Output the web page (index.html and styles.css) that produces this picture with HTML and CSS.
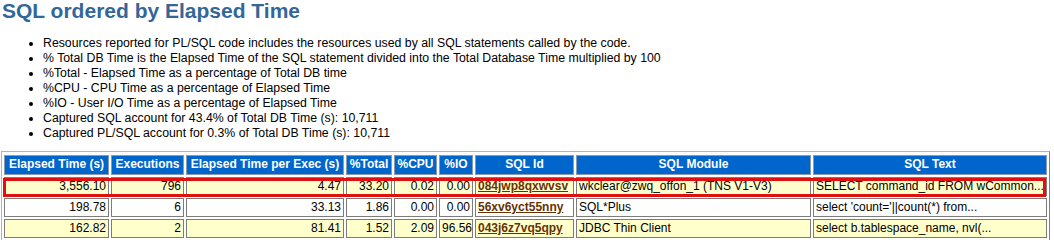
FILE: index.html
```html
<!DOCTYPE html>
<html>
<head>
<meta charset="utf-8">
<title>SQL ordered by Elapsed Time</title>
<link rel="stylesheet" href="styles.css">
</head>
<body>
<div class="page">
  <h2 class="title">SQL ordered by Elapsed Time</h2>
  <ul class="notes">
    <li>Resources reported for PL/SQL code includes the resources used by all SQL statements called by the code.</li>
    <li>% Total DB Time is the Elapsed Time of the SQL statement divided into the Total Database Time multiplied by 100</li>
    <li>%Total - Elapsed Time as a percentage of Total DB time</li>
    <li>%CPU - CPU Time as a percentage of Elapsed Time</li>
    <li>%IO - User I/O Time as a percentage of Elapsed Time</li>
    <li>Captured SQL account for 43.4% of Total DB Time (s): 10,711</li>
    <li>Captured PL/SQL account for 0.3% of Total DB Time (s): 10,711</li>
  </ul>
  <table class="awr">
    <colgroup>
      <col class="c1"><col class="c2"><col class="c3"><col class="c4"><col class="c5"><col class="c6"><col class="c7"><col class="c8"><col class="c9">
    </colgroup>
    <thead>
      <tr>
        <th>Elapsed Time (s)</th>
        <th>Executions</th>
        <th>Elapsed Time per Exec (s)</th>
        <th>%Total</th>
        <th>%CPU</th>
        <th>%IO</th>
        <th>SQL Id</th>
        <th>SQL Module</th>
        <th>SQL Text</th>
      </tr>
    </thead>
    <tbody>
      <tr class="alt">
        <td class="num">3,556.10</td>
        <td class="num">796</td>
        <td class="num">4.47</td>
        <td class="num">33.20</td>
        <td class="num">0.02</td>
        <td class="num">0.00</td>
        <td><a class="sqlid" href="#">084jwp8qxwvsv</a></td>
        <td>wkclear@zwq_offon_1 (TNS V1-V3)</td>
        <td>SELECT command_id FROM wCommon...</td>
      </tr>
      <tr>
        <td class="num">198.78</td>
        <td class="num">6</td>
        <td class="num">33.13</td>
        <td class="num">1.86</td>
        <td class="num">0.00</td>
        <td class="num">0.00</td>
        <td><a class="sqlid" href="#">56xv6yct55nny</a></td>
        <td>SQL*Plus</td>
        <td>select 'count='||count(*) from...</td>
      </tr>
      <tr class="alt">
        <td class="num">162.82</td>
        <td class="num">2</td>
        <td class="num">81.41</td>
        <td class="num">1.52</td>
        <td class="num">2.09</td>
        <td class="num">96.56</td>
        <td><a class="sqlid" href="#">043j6z7vq5qpy</a></td>
        <td>JDBC Thin Client</td>
        <td>select b.tablespace_name, nvl(...</td>
      </tr>
    </tbody>
  </table>
  <div class="highlight"></div>
</div>
</body>
</html>
```
FILE: styles.css
```css
html, body {
  margin: 0;
  padding: 0;
  background: #ffffff;
}

.page {
  position: relative;
  padding: 0 0 0 1px;
  font-family: "Liberation Sans", Arial, sans-serif;
  color: #000000;
}

.title {
  margin: 0 0 0 1px;
  font-size: 21px;
  line-height: 22px;
  font-weight: bold;
  color: #336699;
}

.notes {
  margin: 14px 0 0 0;
  padding-left: 42px;
  font-size: 12.3px;
  line-height: 15px;
  list-style: disc;
}

.notes li {
  padding: 0;
  margin: 0;
}

.awr {
  margin-top: 10px;
  border: 1px solid;
  border-color: #b4b4b4 #808080 #808080 #b4b4b4;
  border-collapse: separate;
  border-spacing: 2px;
  padding-top: 1px;
  table-layout: fixed;
  width: 1049px;
  font-size: 12px;
}

.c1 { width: 105px; }
.c2 { width: 73px; }
.c3 { width: 158px; }
.c4 { width: 46px; }
.c5 { width: 43px; }
.c6 { width: 34px; }
.c7 { width: 99px; }
.c8 { width: 235px; }
.c9 { width: 234px; }

.awr th {
  background: #0066cc;
  color: #ffffff;
  font-weight: bold;
  text-align: center;
  border: 1px solid #8a9bb0;
  padding: 1px 2px 2px;
  line-height: 15px;
  white-space: nowrap;
  overflow: hidden;
}

.awr td {
  background: #ffffff;
  border: 1px solid #7c7c7c;
  padding: 1px 2px;
  line-height: 15px;
  white-space: nowrap;
  overflow: hidden;
  vertical-align: top;
}

.awr tr.alt td {
  background: #ffffcc;
}

.awr td.num {
  text-align: right;
}

.sqlid {
  color: #663300;
  font-weight: bold;
  text-decoration: underline;
}

.highlight {
  position: absolute;
  left: 3px;
  top: 178px;
  width: 1043px;
  height: 19px;
  border: 3px solid #e01010;
  box-sizing: border-box;
  pointer-events: none;
}
```
